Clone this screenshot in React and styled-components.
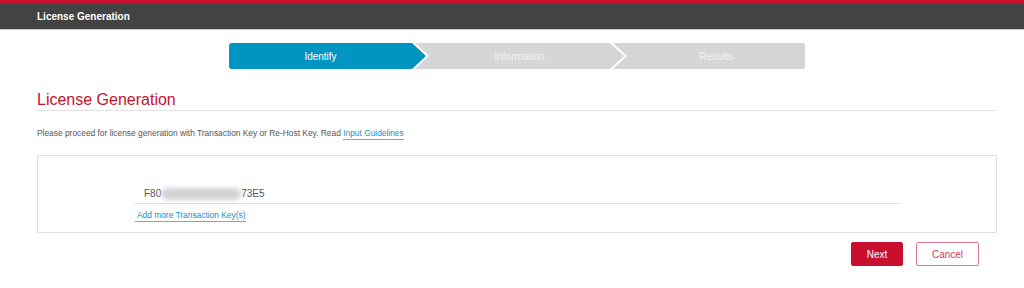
import React from 'react';
import styled, { createGlobalStyle } from 'styled-components';

const GlobalStyle = createGlobalStyle`
  body {
    margin: 0;
    background: #ffffff;
    font-family: "Liberation Sans", Arial, sans-serif;
  }
`;

const steps = ['Identify', 'Information', 'Results'];

const App = () => (
  <>
    <GlobalStyle />
    <TopBar>
      <TopTitle>License Generation</TopTitle>
    </TopBar>
    <Content>
      <Stepper>
        {steps.map((label, i) => (
          <Step
            key={label}
            $active={i === 0}
            $first={i === 0}
            $last={i === steps.length - 1}
          >
            {label}
          </Step>
        ))}
      </Stepper>

      <Heading>License Generation</Heading>

      <Intro>
        Please proceed for license generation with Transaction Key or Re-Host Key. Read{' '}
        <TextLink href="#">Input Guidelines</TextLink>
      </Intro>

      <KeyBox>
        <KeyField>
          F80<Masked />73E5
        </KeyField>
        <AddLink href="#">Add more Transaction Key(s)</AddLink>
      </KeyBox>

      <Actions>
        <Button $primary>Next</Button>
        <Button>Cancel</Button>
      </Actions>
    </Content>
  </>
);

const TopBar = styled('header')`
  height: 26px;
  background: #434343;
  border-top: 3px solid #c8102e;
  border-bottom: 1px solid #c9c9c9;
  display: flex;
  align-items: center;
  padding-left: 37px;
`;

const TopTitle = styled('div')`
  color: #ffffff;
  font-weight: 700;
  font-size: 10px;
`;

const Content = styled('main')`
  padding: 13px 27px 0 37px;
`;

const Stepper = styled('nav')`
  width: 576px;
  height: 26px;
  margin: 0 auto;
  display: flex;
  border-radius: 3px;
  overflow: hidden;
`;

const Step = styled('div')`
  flex: ${(p) => (p.$last ? '1' : 'none')};
  width: ${(p) => (p.$first ? '197px' : '209px')};
  margin-left: ${(p) => (p.$first ? '0' : '-11px')};
  padding-left: ${(p) => (p.$first ? '0' : '14px')};
  padding-right: ${(p) => (p.$last ? '0' : '14px')};
  box-sizing: border-box;
  display: flex;
  align-items: center;
  justify-content: center;
  background: ${(p) => (p.$active ? '#0094c0' : '#d5d6d6')};
  color: ${(p) => (p.$active ? '#ffffff' : '#f3f3f3')};
  font-size: 10px;
  clip-path: ${(p) => {
    if (p.$first) return 'polygon(0 0, calc(100% - 14px) 0, 100% 50%, calc(100% - 14px) 100%, 0 100%)';
    if (p.$last) return 'polygon(0 0, 100% 0, 100% 100%, 0 100%, 14px 50%)';
    return 'polygon(0 0, calc(100% - 14px) 0, 100% 50%, calc(100% - 14px) 100%, 0 100%, 14px 50%)';
  }};
`;

const Heading = styled('h1')`
  margin: 22px 0 0;
  padding-bottom: 1px;
  border-bottom: 1px solid #e2e2e2;
  color: #c8102e;
  font-size: 16px;
  font-weight: 400;
  line-height: 18px;
`;

const Intro = styled('p')`
  margin: 16px 0 0;
  font-size: 8.4px;
  color: #555555;
  line-height: 12px;
`;

const TextLink = styled('a')`
  color: #1a8fc0;
  text-decoration: none;
  border-bottom: 1px solid #5ab6da;
  padding-bottom: 1px;
`;

const KeyBox = styled('section')`
  margin-top: 16px;
  height: 78px;
  border: 1px solid #dedede;
  padding: 28px 97px 0;
  box-sizing: border-box;
`;

const KeyField = styled('div')`
  display: flex;
  align-items: center;
  height: 19px;
  padding-left: 9px;
  border-bottom: 1px solid #dcdcdc;
  font-size: 10px;
  color: #555555;
`;

const Masked = styled('span')`
  display: inline-block;
  width: 80px;
  height: 12px;
  border-radius: 6px;
  background: #d4d4d4;
  filter: blur(2px);
`;

const AddLink = styled('a')`
  display: inline-block;
  margin-top: 2px;
  padding: 0 1px 1px 2px;
  font-size: 8.4px;
  line-height: 10px;
  color: #1a8fc0;
  text-decoration: none;
  border-bottom: 1px solid #5ab6da;
`;

const Actions = styled('div')`
  display: flex;
  justify-content: flex-end;
  gap: 13px;
  padding: 9px 18px 0 0;
`;

const Button = styled('button')`
  height: 24px;
  min-width: ${(p) => (p.$primary ? '52px' : '63px')};
  border-radius: 2px;
  font-family: "Liberation Sans", Arial, sans-serif;
  font-size: 10px;
  border: 1px solid ${(p) => (p.$primary ? '#c8102e' : '#e0778c')};
  background: ${(p) => (p.$primary ? '#c8102e' : '#ffffff')};
  color: ${(p) => (p.$primary ? '#ffffff' : '#d03a5c')};
  cursor: pointer;
`;

export default App;
